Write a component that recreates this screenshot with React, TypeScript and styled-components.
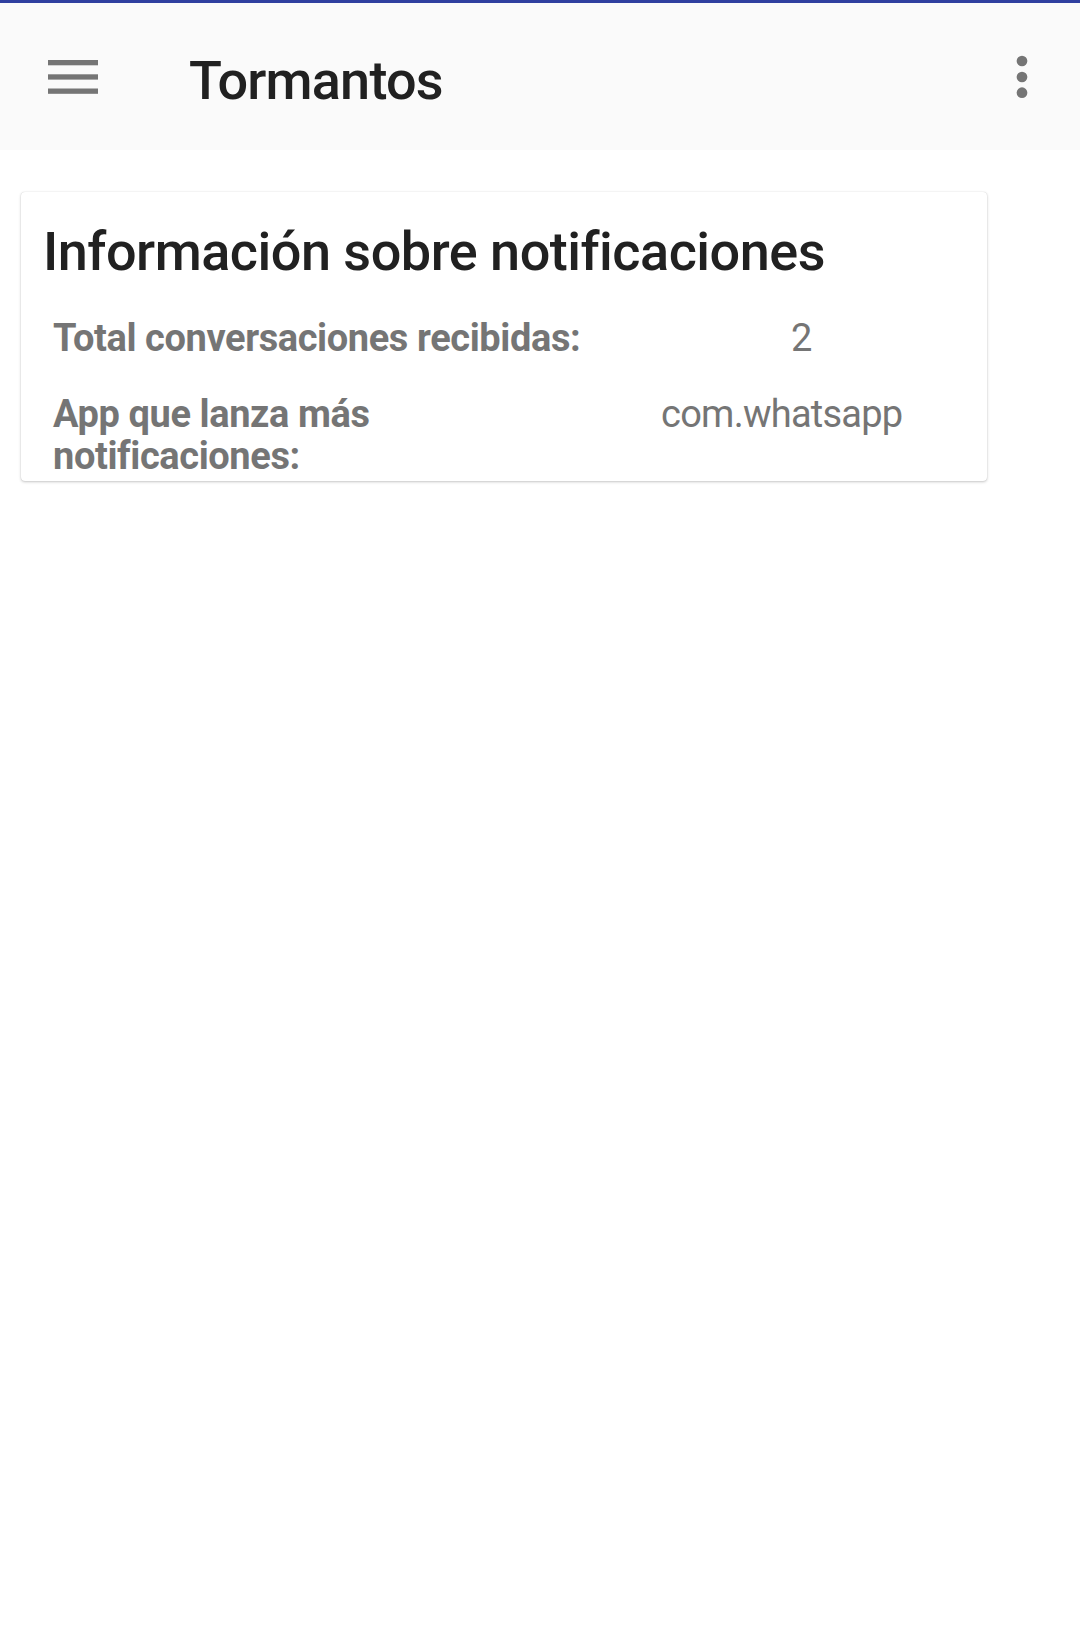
import React from "react";
import styled, { createGlobalStyle } from "styled-components";

const Global = createGlobalStyle`
  html, body { margin: 0; padding: 0; background: #ffffff; }
  body { font-family: Roboto, "Noto Sans", "Liberation Sans", sans-serif; }
  * { box-sizing: border-box; }
`;

const Page = styled.div`
  width: 1080px;
  min-height: 1647px;
  background: #ffffff;
  border-top: 3px solid #303f9f;
`;

const Toolbar = styled.header`
  height: 147px;
  background: #fafafa;
  display: flex;
  align-items: center;
  padding: 0 0 0 48px;
`;

const IconButton = styled.div`
  display: flex;
  align-items: center;
  justify-content: center;
`;

const Title = styled.h1`
  margin: 7px 0 0 91px;
  font-size: 54px;
  letter-spacing: -0.8px;
  font-weight: 500;
  color: #212121;
  flex: 1;
`;

const MoreButton = styled.div`
  width: 116px;
  display: flex;
  justify-content: center;
`;

const Content = styled.main`
  padding: 42px 93px 0 21px;
`;

const Card = styled.section`
  background: #ffffff;
  border-radius: 4px;
  box-shadow: 0 1px 3px rgba(0, 0, 0, 0.22), 0 0 1px rgba(0, 0, 0, 0.18);
  padding: 28px 0 4px 22px;
`;

const CardTitle = styled.h2`
  margin: 0;
  font-size: 54px;
  line-height: 64px;
  letter-spacing: -0.5px;
  font-weight: 500;
  color: #212121;
`;

const InfoTable = styled.div`
  display: grid;
  grid-template-columns: 530px auto;
  column-gap: 78px;
  row-gap: 34px;
  margin-top: 33px;
  padding-left: 10px;
`;

const Label = styled.div`
  font-size: 38px;
  line-height: 42px;
  letter-spacing: -0.4px;
  font-weight: 700;
  color: #757575;
`;

const Value = styled.div<{ $indent?: number }>`
  font-size: 38px;
  line-height: 42px;
  letter-spacing: -0.75px;
  font-weight: 400;
  color: #757575;
  padding-left: ${(p) => p.$indent ?? 0}px;
`;

const MenuIcon = () => (
  <svg width="50" height="34" viewBox="0 0 50 34">
    <rect x="0" y="0" width="50" height="5.3" fill="#757575" />
    <rect x="0" y="14.3" width="50" height="5.3" fill="#757575" />
    <rect x="0" y="28.5" width="50" height="5.3" fill="#757575" />
  </svg>
);

const MoreIcon = () => (
  <svg width="12" height="44" viewBox="0 0 12 44">
    <circle cx="6" cy="6" r="5.35" fill="#757575" />
    <circle cx="6" cy="22" r="5.35" fill="#757575" />
    <circle cx="6" cy="37.7" r="5.35" fill="#757575" />
  </svg>
);

export default function App() {
  return (
    <>
      <Global />
      <Page>
        <Toolbar>
          <IconButton>
            <MenuIcon />
          </IconButton>
          <Title>Tormantos</Title>
          <MoreButton>
            <MoreIcon />
          </MoreButton>
        </Toolbar>
        <Content>
          <Card>
            <CardTitle>Información sobre notificaciones</CardTitle>
            <InfoTable>
              <Label>Total conversaciones recibidas:</Label>
              <Value $indent={130}>2</Value>
              <Label>App que lanza más notificaciones:</Label>
              <Value>com.whatsapp</Value>
            </InfoTable>
          </Card>
        </Content>
      </Page>
    </>
  );
}
